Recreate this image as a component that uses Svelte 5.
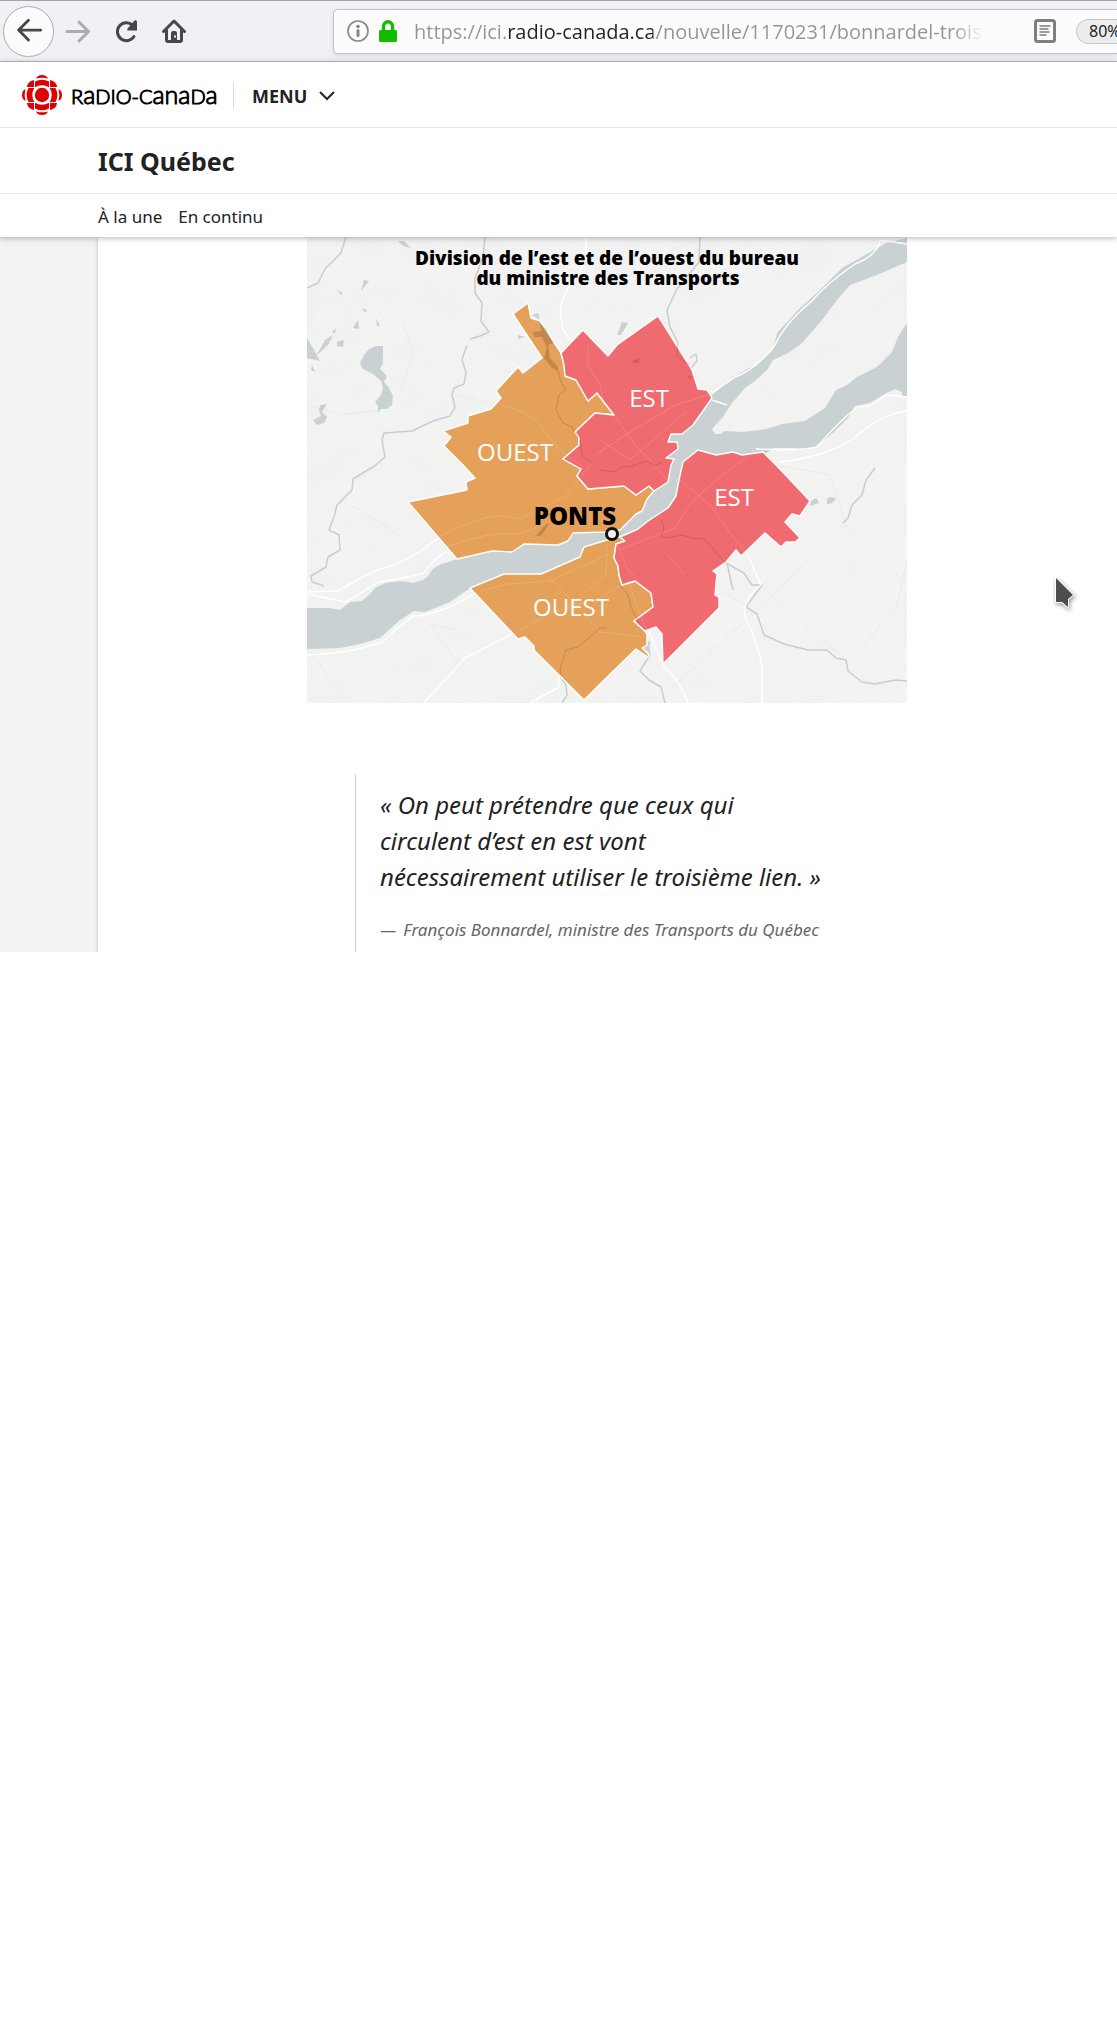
<script>
  const address = 'https://ici.radio-canada.ca/nouvelle/1170231/bonnardel-troisieme-lien';

  const wordmark = [
    { text: 'R', small: false },
    { text: 'a', small: true },
    { text: 'DIO-C', small: false },
    { text: 'ana', small: true },
    { text: 'D', small: false },
    { text: 'a', small: true }
  ];

  const regions = [
    {
      kind: 'west',
      points:
        '528,303 513,314 542,358 523,373 518,367 496,391 501,398 491,409 468,416 468,423 443,431 451,437 444,446 463,465 475,478 466,482 467,490 408,502 457,559 492,551 512,552 524,544 558,545 568,541 573,533 605,532 620,530 636,514 642,511 647,499 654,491 649,486 636,495 624,486 588,489 577,476 581,469 563,459 579,445 579,438 575,432 595,413 614,415 597,393 588,401 576,380 565,376 564,365 561,353 540,321 531,318'
    },
    {
      kind: 'east',
      points:
        '561,353 583,330 608,356 617,345 658,316 692,370 698,389 707,390 712,398 693,425 682,434 671,434 668,442 677,442 678,449 666,458 674,459 671,465 668,482 654,491 649,486 636,495 624,486 588,489 577,476 581,469 563,459 579,445 579,438 575,432 595,413 614,415 597,393 588,401 576,380 565,376 564,365'
    },
    {
      kind: 'west',
      points:
        '470,588 504,574 541,574 580,557 584,547 607,540 620,537 625,541 616,544 614,558 618,566 619,575 622,585 635,581 651,593 653,607 634,621 645,631 647,634 647,645 642,648 649,655 648,657 636,649 600,684 584,700 534,650 534,646 525,637 518,639'
    },
    {
      kind: 'east',
      points:
        '683,462 698,450 716,455 733,452 742,455 763,452 776,465 810,501 800,516 792,514 785,522 800,538 795,542 786,542 781,547 765,533 741,556 736,550 726,562 713,571 717,574 715,595 719,597 719,608 663,664 662,634 656,627 645,631 634,621 653,607 651,593 635,581 622,585 619,575 618,566 614,558 616,544 625,541 620,537 638,529 648,521 668,508 676,496 679,480'
    }
  ];

  const roads = [
    'M307 592 L338 591 Q365 575 380 569 Q410 562 438 538',
    'M307 594 L346 602 Q360 594 378 582 Q410 577 424 573 Q437 555 447 552',
    'M307 655 Q350 654 384 641 Q402 623 414 616 Q436 616 472 595',
    'M424 703 L465 658 Q495 643 518 631',
    'M530 703 L559 687 V675',
    'M585 237 Q590 260 575 280 Q555 300 563 328 Q566 338 574 341',
    'M907 244 L880 240 Q878 255 855 264 Q825 285 813 300 Q785 323 775 345 Q755 370 735 377 L712 393',
    'M756 449 Q800 451 817 447 Q842 418 858 407 L870 406 L886 395 L907 397',
    'M780 462 Q820 458 852 440 Q878 415 907 411',
    'M747 553 L761 585 Q740 602 746 620 Q764 655 762 680 V703',
    'M649 632 Q657 652 664 666 Q682 684 688 703',
    'M712 400 L727 405'
  ];

  const minorRoads = [
    'M761 585 L815 635 L845 658',
    'M665 270 L672 250 L700 237',
    'M776 465 L830 475 L846 525 L907 585',
    'M846 525 L746 620 L670 690',
    'M457 630 L430 624 L460 665',
    'M456 395 L500 406 M400 395 L413 352 L403 325',
    'M307 405 L340 415 L380 410',
    'M307 650 Q325 665 327 680 L350 703',
    'M860 650 L880 625 L896 610 L907 560',
    'M340 500 Q380 520 402 538 M720 590 L745 605'
  ];

  const streams = [
    'M346 237 L341 253 L325 269 L318 283 L307 288',
    'M485 237 L483 257 L475 278 L475 293 L482 303 L481 321 L489 332 L480 336 L470 339',
    'M467 345 L462 359 L466 373 L464 384 L454 388 L452 395 L455 407 L450 416 L433 421 L412 431 L384 433 L382 440 L385 457 L376 465 L353 479 L352 490 L337 505 L334 517 L329 530 L339 535 L340 550 L328 557 L326 567 L311 576 L312 582 L324 586',
    'M700 237 L699 262 L677 289 L667 310 L670 327 L678 343',
    'M726 563 L744 573 L752 585 L762 585 L746 607 L757 614 L764 635 L784 644 L808 650 L827 650 L836 658 L846 660 L848 671 L862 682 L875 684 L895 680 L907 681',
    'M648 643 L650 655 L640 671 L649 680 L661 687 L665 703',
    'M690 358 L696 354 L697 361 L691 368',
    'M559 675 L566 685 L567 695 L562 703',
    'M727 563 L730 577 L733 590',
    'M875 468 L866 480 L862 495 L852 505 L848 518 L843 523'
  ];

  const innerLines = [
    'M501 405 Q535 412 545 432 Q560 454 581 465',
    'M439 537 Q480 515 502 516 L520 519 L566 496 L590 466',
    'M447 547 Q490 530 520 534 L566 515',
    'M588 345 L588 365 L600 385 L604 405',
    'M600 440 L630 460 L665 430 L687 411',
    'M614 415 L635 445 L655 465 L668 482',
    'M595 455 L630 432 L675 405 L708 395',
    'M619 550 L675 528 L690 504 Q720 475 750 455',
    'M680 480 L710 505 L735 540 L748 553',
    'M607 545 L606 575 L592 586 L565 611',
    'M548 576 L577 606 L600 632 L645 637',
    'M519 630 L555 611 L600 598 L620 586',
    'M628 580 L640 615 L648 632',
    'M480 591 L507 584 L550 581 L607 555',
    'M617 545 L628 570 L640 582 M668 555 L684 574'
  ];

  const innerStreams = [
    'M558 371 L561 382 L566 390 L559 395 L556 410 L563 423 L572 427 L578 438',
    'M662 520 L664 530 L661 536 L666 538 L682 535 L696 539 L704 538 L715 551 L726 563',
    'M678 343 L677 356 L684 361 L690 365',
    'M561 675 L560 669 L566 650 L578 647 L590 637 L600 628 L607 628',
    'M620 585 L628 595 L631 607 L640 625',
    'M600 470 L615 472 L622 467 L632 466 L646 461 L655 465 L663 462',
    'M580 440 L582 455 L592 463'
  ];
</script>

<div class="page">
  <nav class="toolbar" aria-label="Navigateur">
    <button class="back" aria-label="Précédent">
      <svg viewBox="0 0 52 52" width="52" height="52"><path d="M15.500 25 H39 M26 14.500 L15.500 25 L26 35.500" /></svg>
    </button>
    <button class="forward" aria-label="Suivant" disabled>
      <svg viewBox="0 0 26 26" width="26" height="26"><path d="M2 13.500 H23 M14 4 L23.500 13.500 L14 23" /></svg>
    </button>
    <button aria-label="Actualiser">
      <svg viewBox="0 0 26 26" width="26" height="26">
        <path d="M19.500 7 A9 9 0 1 0 21 18.500" />
        <path class="solid" d="M21.500 2.500 Q24 1.500 24 4 V12.500 H14.500 Q13.500 11 15 10 Z" />
      </svg>
    </button>
    <button aria-label="Accueil">
      <svg viewBox="0 0 26 26" width="26" height="26">
        <path d="M2.500 13.500 L13 3 L23.500 13.500 M5.500 12 V22 Q5.500 23.500 7 23.500 H19 Q20.500 23.500 20.500 22 V12" />
        <path class="solid" fill-rule="evenodd" d="M10 24 V15 Q10 13 12 13 H14 Q16 13 16 15 V24 Z M13 17.500 V19.500 H15 V17.500 Z" />
      </svg>
    </button>
    <div class="address">
      <svg class="info" viewBox="0 0 22 22" width="22" height="22" aria-hidden="true">
        <circle cx="11" cy="11" r="10" />
        <path d="M11 10.500 V15.500" />
        <circle class="dot" cx="11" cy="6.500" r="1.800" />
      </svg>
      <svg class="lock" viewBox="0 0 18 22" width="18" height="22" aria-hidden="true">
        <path class="shackle" d="M4.500 11 V6.500 A4.500 4.800 0 0 1 13.500 6.500 V11" />
        <rect x="0" y="10" width="18" height="12" rx="1.500" />
      </svg>
      <input type="text" aria-label="Adresse" value={address} />
      <button class="reader" aria-label="Mode lecture">
        <svg viewBox="0 0 22 24" width="22" height="24">
          <rect x="1.500" y="1.500" width="19" height="21" rx="2" />
          <path d="M6 7 H16 M6 10 H14 M6 13 H15 M6 16 H12" />
        </svg>
      </button>
      <button class="zoom">80%</button>
    </div>
  </nav>

  <header>
    <div class="brand">
      <a class="logo" href="#accueil" aria-label="Radio-Canada">
        <svg viewBox="0 0 40 40" width="40" height="40" aria-hidden="true">
          <circle cx="20" cy="20" r="7.200" />
          <path d="M14 3.500 Q15.500 0 20 0 Q24.500 0 26 3.500 Q20 1.800 14 3.500 Z M14 36.500 Q15.500 40 20 40 Q24.500 40 26 36.500 Q20 38.200 14 36.500 Z M3.500 14 Q0 15.500 0 20 Q0 24.500 3.500 26 Q1.800 20 3.500 14 Z M36.500 14 Q40 15.500 40 20 Q40 24.500 36.500 26 Q38.200 20 36.500 14 Z" />
          <path d="M13 6.500 Q20 2.800 27 6.500 V12.300 Q20 8.300 13 12.300 Z M13 33.500 Q20 37.200 27 33.500 V27.700 Q20 31.700 13 27.700 Z M6.500 13 Q2.800 20 6.500 27 H12.300 Q8.300 20 12.300 13 Z M33.500 13 Q37.200 20 33.500 27 H27.700 Q31.700 20 27.700 13 Z" />
          <path d="M12 5 V12 H5 Q5.500 6.500 12 5 Z M28 5 V12 H35 Q34.500 6.500 28 5 Z M12 35 V28 H5 Q5.500 33.500 12 35 Z M28 35 V28 H35 Q34.500 33.500 28 35 Z" />
        </svg>
        <span class="wordmark">{#each wordmark as part}<span class:small={part.small}>{part.text}</span>{/each}</span>
      </a>
      <button class="menu">
        MENU
        <svg viewBox="0 0 16 10" width="16" height="10" aria-hidden="true"><path d="M1 1 L8 8 L15 1" /></svg>
      </button>
    </div>
    <div class="section"><a href="#quebec">ICI Québec</a></div>
    <nav class="links" aria-label="Sections">
      <a href="#une">À la une</a>
      <a href="#continu">En continu</a>
    </nav>
  </header>

  <div class="body">
    <main>
      <svg class="map" viewBox="307 237 600 466" role="img" aria-label="Carte de la division de l’est et de l’ouest">
        <defs>
          <filter id="relief" x="0" y="0" width="100%" height="100%">
            <feTurbulence type="fractalNoise" baseFrequency="0.025 0.035" numOctaves="4" seed="8" />
            <feColorMatrix values="0 0 0 0 0.870  0 0 0 0 0.875  0 0 0 0 0.880  4 0 0 0 -1.700" />
          </filter>
          <linearGradient id="fade" x1="0" y1="0" x2="1" y2="1">
            <stop offset="0" stop-color="#fff" />
            <stop offset="0.500" stop-color="#777" />
            <stop offset="1" stop-color="#333" />
          </linearGradient>
          <mask id="hills"><rect x="307" y="237" width="600" height="466" fill="url(#fade)" /></mask>
        </defs>
        <rect class="land" x="307" y="237" width="600" height="466" />
        <g mask="url(#hills)"><rect x="307" y="237" width="600" height="466" filter="url(#relief)" /></g>

        <g class="minor">{#each minorRoads as d}<path {d} />{/each}</g>
        <g class="streams">{#each streams as d}<path {d} />{/each}</g>

        <g class="water">
          <path d="M907 238 L886 243 L860 258 L842 268 L820 290 L798 310 L777 333 L773 350 L760 362 L733 377 L712 395 L690 425 L665 436 L665 480 L648 490 L620 528 L570 528 L560 541 L520 540 L457 559 L448 562 Q437 565 432 570 Q428 579 420 581 L413 583 Q404 580 393 582 Q385 582 375 588 L370 594 L362 601 L350 602 L340 610 L329 608 L307 608 V649 L340 648 L360 644 L380 638 L400 620 L414 611 L425 612 L450 602 L470 588 L504 579 L545 580 L590 560 L590 548 L625 545 L670 515 L685 475 L698 455 L763 456 L773 448 L793 448 L805 450 L816 446 L833 433 L848 418 L855 406 L870 403 L883 395 L895 389 L902 392 V396 H907 V323 L898 337 L892 352 L877 367 L857 377 L847 385 L836 390 L825 408 L805 421 L782 424 L767 429 L743 432 L724 431 L721 434 L715 434 L712 429 L723 417 L732 403 L746 387 L755 381 L767 370 L773 360 L790 352 L803 342 L822 320 L837 300 L850 285 L877 275 L907 262 Z" />
          <path d="M383 346 L376 346 L369 349 L364 355 L360 363 L363 369 L373 374 L381 381 L383 388 L381 395 L375 402 L378 406 L378 413 L381 409 L387 409 L392 405 L393 396 L389 388 L384 382 L387 376 L380 369 L383 363 Z" />
          <path d="M327 404 L320 405 L319 411 L321 416 L313 420 L317 425 L324 423 L327 417 L322 412 Z" />
          <path d="M307 338 L314 350 L320 361 L307 358 Z M316 356 L325 340 L333 335 L328 345 Z" />
          <path d="M335 330 L336 327 L335 334 L332 331 Z M337 342 L344 340 L343 347 L337 346 Z M312 365 L315 372 L311 370 Z M358 320 L353 328 L359 329 Z M376 318 L380 326 L377 326 Z M337 290 L343 293 L341 295 Z M364 280 L369 281 L361 291 Z M398 241 L404 241 L411 248 L403 246 Z M362 308 L368 311 L364 312 Z" />
          <path d="M622 322 L628 323 L621 335 L617 335 Z M532 315 L538 313 L540 320 Z M518 335 L525 337 L518 339 Z" />
          <path d="M811 501 L816 498 L819 503 L810 506 Z M827 499 Q832 495 836 499 Q833 504 827 504 Z" />
          <path d="M642 648 L650 640 L649 652 Z" />
        </g>

        <g class="roads">{#each roads as d}<path {d} />{/each}</g>

        {#each regions as region}
          <polygon class={region.kind} points={region.points} />
        {/each}
        <g class="shade">
          <path d="M540 323 L546 329 L553 343 L548 345 L550 358 L558 367 L558 371 L552 368 L544 358 L547 348 L542 337 L534 337 L533 332 L541 331 Z" />
          <path d="M536 536 L547 523 L549 524 L541 536 Z" />
          <path d="M630 362 L640 358 L638 363 Z M687 375 L692 377 L690 379 Z" />
        </g>
        <g class="inner-lines">{#each innerLines as d}<path {d} />{/each}</g>
        <g class="inner-streams">{#each innerStreams as d}<path {d} />{/each}</g>

        <g class="title">
          <text x="607" y="265">Division de l’est et de l’ouest du bureau</text>
          <text x="608" y="285">du ministre des Transports</text>
        </g>
        <g class="labels">
          <text x="515" y="461">OUEST</text>
          <text x="649" y="407">EST</text>
          <text x="734" y="506">EST</text>
          <text x="571" y="616">OUEST</text>
        </g>
        <text class="bridges" x="575" y="525">PONTS</text>
        <circle class="marker" cx="612" cy="534" r="5.500" />
      </svg>

      <blockquote>
        <p>« On peut prétendre que ceux qui<br />circulent d’est en est vont<br />nécessairement utiliser le troisième lien. »</p>
        <cite><span>—</span>François Bonnardel, ministre des Transports du Québec</cite>
      </blockquote>
    </main>
  </div>

  <svg class="pointer" viewBox="0 0 24 36" width="24" height="36" aria-hidden="true">
    <path d="M3 3 V27 H9 L15 32 V24 L20 20 Z" />
  </svg>
</div>

<style>
  :global(body) {
    background: #fff;
  }

  .page {
    position: relative;
    overflow: hidden;
    color: #222;
    font-family: 'Noto Sans', 'Open Sans', sans-serif;
  }

  .page * {
    box-sizing: border-box;
  }

  a {
    color: inherit;
    text-decoration: none;
  }

  button {
    display: flex;
    align-items: center;
    flex: none;
    padding: 0;
    border: 0;
    background: none;
    color: #45474a;
    font-family: inherit;
  }

  .toolbar {
    display: flex;
    align-items: center;
    height: 62px;
    padding-left: 3px;
    border-top: 1px solid #a2a3a7;
    border-bottom: 1px solid #bcbdc1;
    background: #f0f1f4;
  }

  .toolbar button path {
    fill: none;
    stroke: currentColor;
    stroke-width: 3;
    stroke-linecap: round;
    stroke-linejoin: round;
  }

  .toolbar button .solid {
    fill: currentColor;
    stroke: none;
  }

  .toolbar > button {
    margin-right: 22px;
  }

  .toolbar > .back {
    width: 51px;
    height: 51px;
    margin-right: 11px;
    border: 1px solid #aaabae;
    border-radius: 50%;
    background: #fcfcfd;
  }

  .toolbar > .forward {
    color: #abacaf;
  }

  .toolbar > button:nth-of-type(4) {
    margin-right: 146px;
  }

  .address {
    display: flex;
    align-items: center;
    flex: 1;
    min-width: 0;
    height: 45px;
    padding-left: 13px;
    border: 1px solid #bfc0c3;
    border-right: 0;
    border-radius: 5px 0 0 5px;
    background: #fcfcfc;
    box-shadow: 0 2px 5px rgba(0, 0, 0, 0.08);
    overflow: hidden;
  }

  .info {
    flex: none;
    margin-right: 10px;
    fill: none;
    stroke: #85868a;
    stroke-width: 1.600;
  }

  .info path {
    stroke-width: 3;
    stroke-linecap: round;
  }

  .info .dot {
    fill: #85868a;
    stroke: none;
  }

  .lock {
    flex: none;
    margin-right: 17px;
    fill: #12bc00;
  }

  .shackle {
    fill: none;
    stroke: #12bc00;
    stroke-width: 3.400;
  }

  .address input {
    flex: 1;
    min-width: 0;
    height: 40px;
    padding: 0;
    border: 0;
    outline: 0;
    background: linear-gradient(90deg, #949494 92px, #222 92px, #222 239px, #949494 239px, #949494 540px, transparent 570px);
    -webkit-background-clip: text;
    background-clip: text;
    color: transparent;
    font: 20px 'Open Sans', sans-serif;
  }

  .address .reader {
    margin: 0 20px 0 52px;
    color: #7d7e80;
  }

  .reader rect {
    fill: none;
    stroke: currentColor;
    stroke-width: 3;
  }

  .address .reader path {
    stroke-width: 1.400;
  }

  .address .zoom {
    width: 60px;
    height: 25px;
    margin-right: -19px;
    padding-left: 12px;
    border: 1px solid #c4c4c4;
    border-radius: 13px;
    background: #ededee;
    color: #222;
    font-size: 16px;
  }

  header {
    position: relative;
    z-index: 1;
    background: #fff;
    box-shadow: 0 1px 6px rgba(0, 0, 0, 0.3);
  }

  .brand {
    display: flex;
    align-items: center;
    height: 66px;
    padding-left: 22px;
    border-bottom: 1px solid #e6e6e6;
  }

  .logo {
    display: flex;
    align-items: center;
    gap: 9px;
    height: 26px;
    padding-right: 15px;
    border-right: 1px solid #dcdcdc;
    color: #000;
  }

  .logo svg {
    fill: #df0000;
  }

  .wordmark {
    width: 147px;
    font: 300 20px/26px Lato, sans-serif;
    white-space: nowrap;
    -webkit-text-stroke: 1px #000;
  }

  .wordmark .small {
    font-size: 25px;
  }

  .menu {
    gap: 12px;
    padding: 2px 0 0 18px;
    color: #222;
    font: 700 18px 'Noto Sans', sans-serif;
  }

  .menu path {
    fill: none;
    stroke: #222;
    stroke-width: 2;
  }

  .section {
    display: flex;
    align-items: center;
    height: 66px;
    padding-left: 98px;
    border-bottom: 1px solid #e6e6e6;
    font-weight: 700;
    font-size: 25px;
  }

  .links {
    display: flex;
    align-items: center;
    gap: 16px;
    height: 43px;
    padding: 2px 0 0 98px;
    font-size: 17px;
  }

  .body {
    padding-left: 98px;
    background: #f3f3f3;
    overflow: hidden;
  }

  main {
    padding: 0 32px 0 209px;
    background: #fff;
    box-shadow: 0 0 4px rgba(0, 0, 0, 0.25);
  }

  .map {
    display: block;
    width: 100%;
    max-width: 600px;
  }

  .land {
    fill: #f3f3f2;
  }

  .map path {
    stroke-linejoin: round;
  }

  .water path {
    fill: #c9d1d3;
  }

  .streams path,
  .minor path,
  .roads path,
  .inner-lines path,
  .inner-streams path {
    fill: none;
  }

  .streams {
    stroke: #c7ced1;
    stroke-width: 1.500;
  }

  .minor {
    stroke: #eaeaea;
    stroke-width: 1;
  }

  .roads {
    stroke: #fff;
    stroke-width: 1.500;
  }

  .inner-lines {
    stroke: #fff;
    stroke-opacity: 0.14;
    stroke-width: 1;
  }

  .inner-streams {
    stroke: #5a3c28;
    stroke-opacity: 0.25;
    stroke-width: 1;
  }

  .shade {
    fill: #5a3c1e;
    fill-opacity: 0.25;
  }

  polygon {
    stroke: #fff;
    stroke-width: 1.400;
    stroke-linejoin: round;
  }

  .west {
    fill: #e5a159;
  }

  .east {
    fill: #ef6b70;
  }

  .map text {
    font-family: 'Open Sans', sans-serif;
    text-anchor: middle;
  }

  .title text {
    font-size: 19px;
    font-weight: 800;
  }

  .labels text {
    fill: #fff;
    font-size: 24px;
  }

  .map .bridges {
    font-size: 24px;
    font-weight: 800;
  }

  .marker {
    fill: #f0f0f0;
    stroke: #111;
    stroke-width: 3;
  }

  blockquote {
    max-width: 520px;
    margin: 71px 0 0 48px;
    padding: 13px 0 9px 24px;
    border-left: 1px solid #ccc;
    font-style: italic;
  }

  blockquote p {
    margin: 0 0 21px;
    font-size: 24px;
    line-height: 36px;
  }

  cite {
    display: flex;
    gap: 7px;
    color: #666;
    font-size: 17px;
    line-height: 27px;
  }

  .pointer {
    position: absolute;
    top: 575px;
    left: 1053px;
    fill: #4d4d4d;
    stroke: #fff;
    stroke-width: 2;
    paint-order: stroke;
    filter: drop-shadow(1px 2px 2px rgba(0, 0, 0, 0.4));
  }
</style>
